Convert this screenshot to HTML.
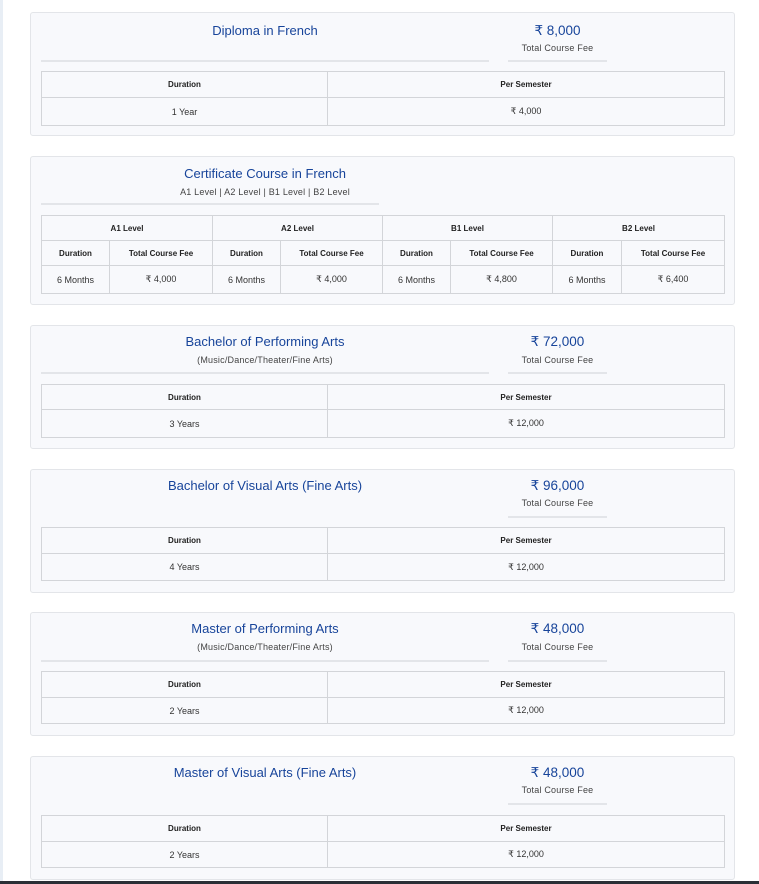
<!DOCTYPE html>
<html><head><meta charset="utf-8"><style>
*{margin:0;padding:0;box-sizing:border-box}
body{width:759px;height:884px;background:#fff;font-family:"Liberation Sans",Arial,sans-serif;position:relative;overflow:hidden}
.strip{position:absolute;left:0;top:0;width:3px;height:884px;background:#e8eef5}
.bot{position:absolute;left:0;top:881px;width:759px;height:3px;background:#2a2f36}
.card{position:absolute;left:30px;width:705px;background:#f8f9fc;border:1px solid #e3e5e9;border-radius:3px}
.t{position:absolute;left:41px;width:448px;text-align:center;color:#17449a;font-size:13px}
.s{position:absolute;left:41px;width:448px;text-align:center;color:#444;font-size:9px;letter-spacing:.2px}
.f{position:absolute;left:508px;width:99px;text-align:center;color:#17449a;font-size:13.5px}
.fs{position:absolute;left:508px;width:99px;text-align:center;color:#444;font-size:9px;letter-spacing:.2px}
.ln{position:absolute;height:2px;background:#e3e5e9}
table{position:absolute;left:41px;width:684px;border-collapse:collapse;table-layout:fixed}
td{border:1.5px solid #d3d5d9;text-align:center;font-size:9px;color:#333;padding:0}
th{border:1.5px solid #d3d5d9;text-align:center;font-size:8px;color:#222;font-weight:bold;padding:0}
</style></head><body>
<div class="strip"></div>

<div class="card" style="top:12px;height:124px"></div>
<div class="t" style="top:23px">Diploma in French</div>
<div class="f" style="top:23px">₹ 8,000</div>
<div class="fs" style="top:43px">Total Course Fee</div>
<div class="ln" style="left:41px;width:448px;top:60px"></div>
<div class="ln" style="left:508px;width:99px;top:60px"></div>
<table style="top:71px"><col style="width:286px"><col><tr style="height:26px"><th>Duration</th><th>Per Semester</th></tr><tr style="height:28px"><td>1 Year</td><td>₹ 4,000</td></tr></table>

<div class="card" style="top:156px;height:149px"></div>
<div class="t" style="top:166px">Certificate Course in French</div>
<div class="s" style="top:187px">A1 Level | A2 Level | B1 Level | B2 Level</div>
<div class="ln" style="left:41px;width:338px;top:203px"></div>
<table style="top:215px"><col style="width:68px"><col style="width:103px"><col style="width:68px"><col style="width:102px"><col style="width:68px"><col style="width:102px"><col style="width:69px"><col>
<tr style="height:25px"><th colspan="2">A1 Level</th><th colspan="2">A2 Level</th><th colspan="2">B1 Level</th><th colspan="2">B2 Level</th></tr>
<tr style="height:25px"><th>Duration</th><th>Total Course Fee</th><th>Duration</th><th>Total Course Fee</th><th>Duration</th><th>Total Course Fee</th><th>Duration</th><th>Total Course Fee</th></tr>
<tr style="height:28px"><td>6 Months</td><td>₹ 4,000</td><td>6 Months</td><td>₹ 4,000</td><td>6 Months</td><td>₹ 4,800</td><td>6 Months</td><td>₹ 6,400</td></tr></table>

<div class="card" style="top:325px;height:124px"></div>
<div class="t" style="top:334px">Bachelor of Performing Arts</div>
<div class="s" style="top:355px">(Music/Dance/Theater/Fine Arts)</div>
<div class="f" style="top:334px">₹ 72,000</div>
<div class="fs" style="top:355px">Total Course Fee</div>
<div class="ln" style="left:41px;width:448px;top:372px"></div>
<div class="ln" style="left:508px;width:99px;top:372px"></div>
<table style="top:384px"><col style="width:286px"><col><tr style="height:25px"><th>Duration</th><th>Per Semester</th></tr><tr style="height:28px"><td>3 Years</td><td>₹ 12,000</td></tr></table>

<div class="card" style="top:469px;height:124px"></div>
<div class="t" style="top:478px">Bachelor of Visual Arts (Fine Arts)</div>
<div class="f" style="top:478px">₹ 96,000</div>
<div class="fs" style="top:498px">Total Course Fee</div>
<div class="ln" style="left:508px;width:99px;top:516px"></div>
<table style="top:527px"><col style="width:286px"><col><tr style="height:26px"><th>Duration</th><th>Per Semester</th></tr><tr style="height:27px"><td>4 Years</td><td>₹ 12,000</td></tr></table>

<div class="card" style="top:612px;height:124px"></div>
<div class="t" style="top:621px">Master of Performing Arts</div>
<div class="s" style="top:642px">(Music/Dance/Theater/Fine Arts)</div>
<div class="f" style="top:621px">₹ 48,000</div>
<div class="fs" style="top:642px">Total Course Fee</div>
<div class="ln" style="left:41px;width:448px;top:660px"></div>
<div class="ln" style="left:508px;width:99px;top:660px"></div>
<table style="top:671px"><col style="width:286px"><col><tr style="height:26px"><th>Duration</th><th>Per Semester</th></tr><tr style="height:26px"><td>2 Years</td><td>₹ 12,000</td></tr></table>

<div class="card" style="top:756px;height:124px"></div>
<div class="t" style="top:765px">Master of Visual Arts (Fine Arts)</div>
<div class="f" style="top:765px">₹ 48,000</div>
<div class="fs" style="top:785px">Total Course Fee</div>
<div class="ln" style="left:508px;width:99px;top:803px"></div>
<table style="top:815px"><col style="width:286px"><col><tr style="height:26px"><th>Duration</th><th>Per Semester</th></tr><tr style="height:26px"><td>2 Years</td><td>₹ 12,000</td></tr></table>

<div class="bot"></div>
</body></html>
